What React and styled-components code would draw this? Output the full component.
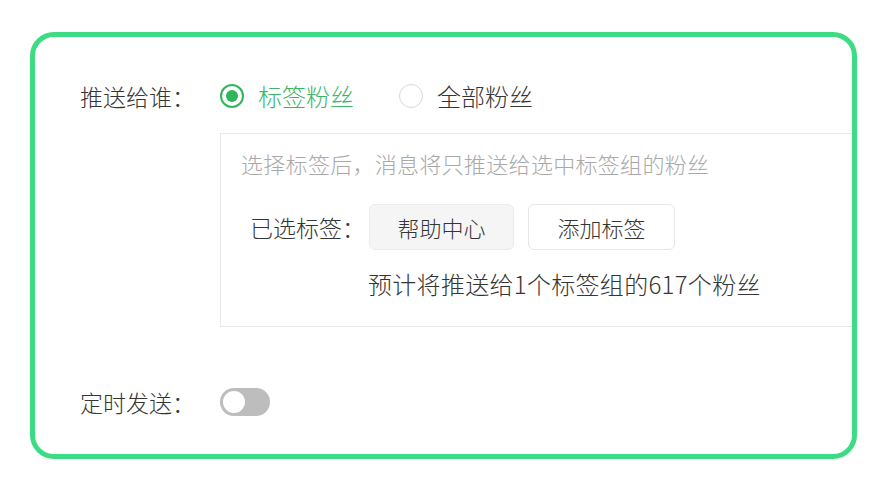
import React, { useState } from 'react';
import styled, { createGlobalStyle } from 'styled-components';

const GlobalStyle = createGlobalStyle`
  body {
    margin: 0;
    background: #ffffff;
    font-family: "Noto Sans CJK SC", "Noto Sans", sans-serif;
    font-weight: 300;
    color: #353535;
  }
`;

const Card = styled.div`
  box-sizing: border-box;
  width: 827px;
  height: 427px;
  margin: 32px 0 0 30px;
  border: 5px solid #3ddc84;
  border-radius: 24px;
  overflow: hidden;
  padding: 43px 0 0 45px;
`;

const Row = styled.div`
  display: flex;
  align-items: center;
  height: 32px;
  margin-top: ${(p) => p.$top || 0}px;
`;

const Label = styled.div`
  width: 140px;
  flex-shrink: 0;
  font-size: 23px;
  line-height: 32px;
  color: #353535;
`;

const RadioOption = styled.label`
  display: flex;
  align-items: center;
  gap: 14px;
  margin-right: 45px;
  font-size: 24px;
  line-height: 32px;
  color: ${(p) => (p.$checked ? '#3cb56a' : '#353535')};
  cursor: pointer;
`;

const RadioRing = styled.span`
  box-sizing: border-box;
  width: 24px;
  height: 24px;
  border-radius: 50%;
  border: ${(p) => (p.$checked ? '2px solid #2fb65a' : '1.5px solid #d8d8d8')};
  display: flex;
  align-items: center;
  justify-content: center;

  &::after {
    content: '';
    width: 12px;
    height: 12px;
    border-radius: 50%;
    background: #2fb65a;
    display: ${(p) => (p.$checked ? 'block' : 'none')};
  }
`;

const TagPanel = styled.div`
  box-sizing: border-box;
  width: 700px;
  height: 194px;
  margin: 21px 0 0 140px;
  border: 1px solid #e7e7e7;
  padding: 14px 0 0 20px;
`;

const Hint = styled.div`
  font-size: 22px;
  line-height: 30px;
  letter-spacing: 0.3px;
  color: #a9a9a9;
`;

const SelectedRow = styled.div`
  display: flex;
  align-items: center;
  gap: 14px;
  margin-top: 26px;
  padding-left: 9px;
`;

const SelectedLabel = styled.span`
  font-size: 23px;
  line-height: 30px;
  color: #353535;
  margin-right: -10px;
`;

const TagButton = styled.button`
  box-sizing: border-box;
  width: ${(p) => p.$width}px;
  height: 46px;
  border-radius: 6px;
  border: 1px solid ${(p) => (p.$filled ? '#ebebeb' : '#e6e6e6')};
  background: ${(p) => (p.$filled ? '#f5f5f5' : '#ffffff')};
  font-family: inherit;
  font-weight: inherit;
  font-size: 22px;
  color: #353535;
  padding: 0;
  cursor: pointer;
`;

const Estimate = styled.div`
  margin: 19px 0 0 127px;
  font-size: 24px;
  line-height: 30px;
  letter-spacing: 0.3px;
  color: #353535;
`;

const Switch = styled.button`
  box-sizing: border-box;
  width: 50px;
  height: 28px;
  border-radius: 14px;
  border: none;
  padding: 3px;
  background: ${(p) => (p.$on ? '#3cb56a' : '#bdbdbd')};
  display: flex;
  justify-content: ${(p) => (p.$on ? 'flex-end' : 'flex-start')};
  cursor: pointer;

  &::after {
    content: '';
    width: 22px;
    height: 22px;
    border-radius: 50%;
    background: #ffffff;
  }
`;

export default function App() {
  const [target, setTarget] = useState('tag');
  const [timed, setTimed] = useState(false);

  return (
    <>
      <GlobalStyle />
      <Card>
        <Row>
          <Label>推送给谁：</Label>
          <RadioOption $checked={target === 'tag'} onClick={() => setTarget('tag')}>
            <RadioRing $checked={target === 'tag'} />
            标签粉丝
          </RadioOption>
          <RadioOption $checked={target === 'all'} onClick={() => setTarget('all')}>
            <RadioRing $checked={target === 'all'} />
            全部粉丝
          </RadioOption>
        </Row>

        <TagPanel>
          <Hint>选择标签后，消息将只推送给选中标签组的粉丝</Hint>
          <SelectedRow>
            <SelectedLabel>已选标签：</SelectedLabel>
            <TagButton $filled $width={145}>帮助中心</TagButton>
            <TagButton $width={147}>添加标签</TagButton>
          </SelectedRow>
          <Estimate>预计将推送给1个标签组的617个粉丝</Estimate>
        </TagPanel>

        <Row $top={59}>
          <Label>定时发送：</Label>
          <Switch $on={timed} onClick={() => setTimed(!timed)} />
        </Row>
      </Card>
    </>
  );
}
